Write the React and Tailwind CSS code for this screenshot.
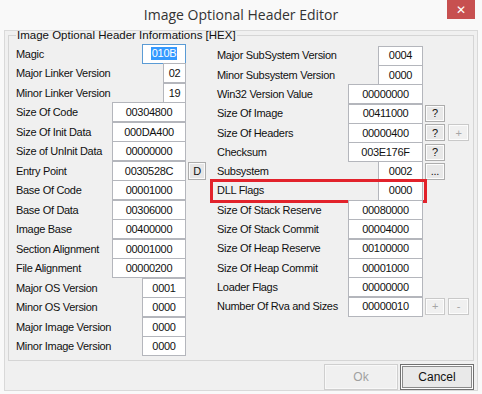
import React from "react";

const left = [
  { label: "Magic", value: "010B", w: "w-[44px]", focus: true },
  { label: "Major Linker Version", value: "02", w: "w-[23px]" },
  { label: "Minor Linker Version", value: "19", w: "w-[23px]" },
  { label: "Size Of Code", value: "00304800", w: "w-[74px]" },
  { label: "Size Of Init Data", value: "000DA400", w: "w-[74px]" },
  { label: "Size of UnInit Data", value: "00000000", w: "w-[74px]" },
  { label: "Entry Point", value: "0030528C", w: "w-[74px]", btn: "D" },
  { label: "Base Of Code", value: "00001000", w: "w-[74px]" },
  { label: "Base Of Data", value: "00306000", w: "w-[74px]" },
  { label: "Image Base", value: "00400000", w: "w-[74px]" },
  { label: "Section Alignment", value: "00001000", w: "w-[74px]" },
  { label: "File Alignment", value: "00000200", w: "w-[74px]" },
  { label: "Major OS Version", value: "0001", w: "w-[44px]" },
  { label: "Minor OS Version", value: "0000", w: "w-[44px]" },
  { label: "Major Image Version", value: "0000", w: "w-[44px]" },
  { label: "Minor Image Version", value: "0000", w: "w-[44px]" },
];

const right = [
  { label: "Major SubSystem Version", value: "0004", w: "w-[45px]" },
  { label: "Minor Subsystem Version", value: "0000", w: "w-[45px]" },
  { label: "Win32 Version Value", value: "00000000", w: "w-[75px]" },
  { label: "Size Of Image", value: "00411000", w: "w-[75px]", btns: ["?"] },
  { label: "Size Of Headers", value: "00000400", w: "w-[75px]", btns: ["?", "+"] },
  { label: "Checksum", value: "003E176F", w: "w-[75px]", btns: ["?"] },
  { label: "Subsystem", value: "0002", w: "w-[45px]", btns: ["..."] },
  { label: "DLL Flags", value: "0000", w: "w-[45px]", mark: true },
  { label: "Size Of Stack Reserve", value: "00080000", w: "w-[75px]" },
  { label: "Size Of Stack Commit", value: "00004000", w: "w-[75px]" },
  { label: "Size Of Heap Reserve", value: "00100000", w: "w-[75px]" },
  { label: "Size Of Heap Commit", value: "00001000", w: "w-[75px]" },
  { label: "Loader Flags", value: "00000000", w: "w-[75px]" },
  { label: "Number Of Rva and Sizes", value: "00000010", w: "w-[75px]", btns: ["+", "-"] },
];

function Box({ value, w, focus }) {
  return (
    <div
      className={`${w} h-[20px] shrink-0 flex items-center justify-center bg-white border ${
        focus ? "border-[#5a9bd5]" : "border-[#b4b6bc]"
      }`}
    >
      {focus ? (
        <span className="bg-[#3399ff] text-white px-[1px] leading-[13px]">{value}</span>
      ) : (
        value
      )}
    </div>
  );
}

function SmallBtn({ children, disabled, wide }) {
  return (
    <div
      className={`${wide ? "w-[21px]" : "w-[20px]"} h-[17px] shrink-0 flex items-center justify-center border shadow-[inset_0_0_0_1px_#fcfcfc] ${
        disabled
          ? "border-[#c9c9c9] bg-[#f0f0f0] text-[#a6a6a6]"
          : "border-[#adadad] bg-[#e8e8e8] text-[#111]"
      }`}
    >
      {children}
    </div>
  );
}

export default function App() {
  return (
    <div className="w-[482px] h-[394px] bg-[#f9f9f9] flex flex-col text-[11px] tracking-[-0.3px] text-[#111] font-['Liberation_Sans',Arial,sans-serif]">
      {/* title bar */}
      <div className="h-[30px] flex items-start">
        <div className="w-[35px]" />
        <div className="flex-1 text-center pt-[4px] text-[14px] tracking-normal text-[#333] font-['Open_Sans','Noto_Sans',sans-serif]">
          Image Optional Header Editor
        </div>
        <div className="w-[28px] h-[19px] mr-[7px] bg-[#c75050] flex items-center justify-center text-white text-[12px] font-bold tracking-normal font-['DejaVu_Sans',sans-serif]">
          ✕
        </div>
      </div>

      {/* client area */}
      <div className="mx-[4px] h-[361px] border border-[#d9d9d9] bg-[#f0f0f0] flex flex-col">
        <fieldset className="mx-[3px] h-[330px] border border-[#d5d5d5] pl-[7px] pr-[4px]">
          <legend className="px-[1px] leading-[8px] text-[11.5px] tracking-normal text-[#111]">
            Image Optional Header Informations [HEX]
          </legend>
          <div className="grid grid-cols-[190px_1fr] gap-x-[4px] pt-[5px]">
            <div className="flex flex-col">
              {left.map((r) => (
                <div key={r.label} className="h-[19.5px] flex items-center">
                  <span className="flex-1 whitespace-nowrap">{r.label}</span>
                  <Box value={r.value} w={r.w} focus={r.focus} />
                  <div className="w-[20px] pl-[2px] flex">
                    {r.btn && (
                      <div className="w-[18px] h-[18px] flex items-center justify-center border border-[#acacac] bg-[#e6e6e6] shadow-[inset_0_0_0_1px_#fafafa]">
                        {r.btn}
                      </div>
                    )}
                  </div>
                </div>
              ))}
            </div>
            <div className="flex flex-col pt-[2px]">
              {right.map((r) => (
                <div key={r.label} className="relative h-[19.3px] flex items-center pl-[7px]">
                  <span className="flex-1 whitespace-nowrap">{r.label}</span>
                  <Box value={r.value} w={r.w} />
                  <div className="w-[46px] flex gap-[3px] pl-[2px]">
                    {r.btns &&
                      r.btns.map((b, i) => (
                        <SmallBtn key={i} wide={i === 1} disabled={b === "+" || b === "-"}>
                          {b}
                        </SmallBtn>
                      ))}
                  </div>
                  {r.mark && (
                    <div className="absolute left-0 top-[-2px] w-[217px] h-[24px] border-[3px] border-[#e2222b]" />
                  )}
                </div>
              ))}
            </div>
          </div>
        </fieldset>

        <div className="flex justify-end gap-[2px] pr-[3px] mt-[3px]">
          <div className="w-[74px] h-[26px] flex items-center justify-center border border-[#cfcfcf] bg-[#f0f0f0] text-[#a0a0a0] text-[12px] tracking-normal shadow-[inset_0_0_0_1px_#f8f8f8]">
            Ok
          </div>
          <div className="w-[74px] h-[26px] flex items-center justify-center border border-[#707070] bg-[#e9e9e9] text-[#111] text-[12px] tracking-normal shadow-[inset_0_0_0_1px_#fdfdfd,inset_0_0_0_2px_#8a8a8a]">
            Cancel
          </div>
        </div>
      </div>
    </div>
  );
}
